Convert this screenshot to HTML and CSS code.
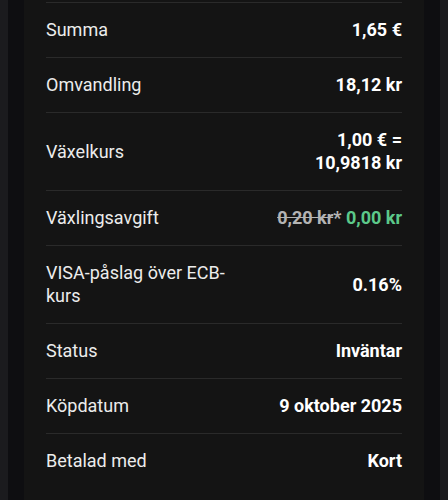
FILE: index.html
```html
<!DOCTYPE html>
<html lang="sv">
<head>
    <meta charset="UTF-8">
    <meta name="viewport" content="width=device-width, initial-scale=1.0">
    <title>Köpdetaljer</title>
    <link rel="stylesheet" href="styles.css">
</head>
<body>
    <div class="sheet">
        <div class="card">
            <div class="row">
                <div class="label">Summa</div>
                <div class="value">1,65 €</div>
            </div>
            <div class="row">
                <div class="label">Omvandling</div>
                <div class="value">18,12 kr</div>
            </div>
            <div class="row">
                <div class="label">Växelkurs</div>
                <div class="value">1,00 € = 10,9818 kr</div>
            </div>
            <div class="row">
                <div class="label">Växlingsavgift</div>
                <div class="value"><span class="old">0,20 kr</span><span class="star">*</span> <span class="free">0,00 kr</span></div>
            </div>
            <div class="row">
                <div class="label">VISA-påslag över ECB-kurs</div>
                <div class="value">0.16%</div>
            </div>
            <div class="row">
                <div class="label">Status</div>
                <div class="value">Inväntar</div>
            </div>
            <div class="row">
                <div class="label">Köpdatum</div>
                <div class="value">9 oktober 2025</div>
            </div>
            <div class="row">
                <div class="label">Betalad med</div>
                <div class="value">Kort</div>
            </div>
        </div>
    </div>
</body>
</html>
```

FILE: styles.css
```css
html, body {
    height: 100%;
}
body {
    margin: 0;
    padding: 0 8px;
    background-color: #1b1b1e;
    font-family: Roboto, 'Noto Sans', sans-serif;
    color: #ececec;
    box-sizing: border-box;
}
.sheet {
    min-height: 100%;
    padding: 0 16px;
    background-color: #0e0e11;
    box-sizing: border-box;
}
.card {
    min-height: 500px;
    padding: 2px 22px 0;
    background-color: #141414;
    box-sizing: border-box;
}
.row {
    display: grid;
    grid-template-columns: 1fr 128px;
    gap: 24px;
    align-items: center;
    padding: 15px 0 16px;
    border-top: 1px solid #2a2a2a;
    font-size: 18px;
    line-height: 23px;
}
.label {
    color: #ececec;
}
.value {
    text-align: right;
    font-weight: 700;
    color: #ffffff;
}
.old {
    color: #b4b4b4;
    text-decoration: line-through;
}
.star {
    color: #b4b4b4;
}
.free {
    color: #5cc98a;
}
```
